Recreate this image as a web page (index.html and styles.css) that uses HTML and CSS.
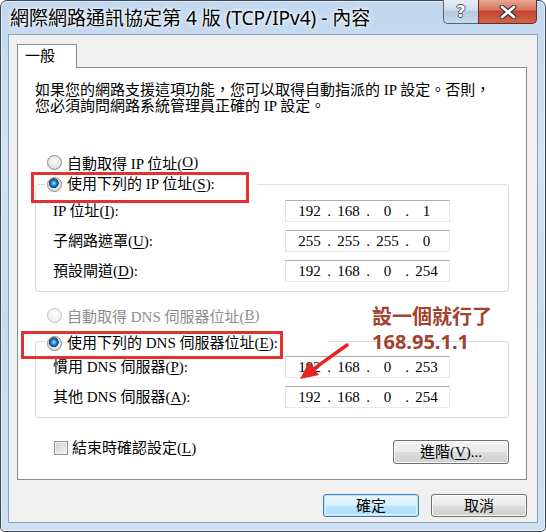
FILE: index.html
```html
<!DOCTYPE html>
<html>
<head>
  <meta charset="utf-8">
  <link rel="stylesheet" href="styles.css">
</head>
<body>
  <div class="window">
    <div class="titlebar">
      <span class="title">網際網路通訊協定第 4 版 (TCP/IPv4) - 內容</span>
      <div class="caption-buttons">
        <div class="cap help">?</div>
        <div class="cap close">
          <svg viewBox="0 0 20 14" width="20" height="14">
            <path d="M4 2L16 12M16 2L4 12" stroke="#3a3f46" stroke-width="5" stroke-linecap="round"/>
            <path d="M4 2L16 12M16 2L4 12" stroke="#fff" stroke-width="2.6" stroke-linecap="round"/>
          </svg>
        </div>
      </div>
    </div>

    <div class="client">
      <div class="tabs">
        <div class="tab">一般</div>
      </div>

      <div class="panel">
        <p class="desc">如果您的網路支援這項功能，您可以取得自動指派的 IP 設定。否則，<br>您必須詢問網路系統管理員正確的 IP 設定。</p>

        <div class="radio-row"><span class="radio"></span>自動取得 IP 位址(<u>O</u>)</div>

        <fieldset class="group">
          <legend class="legend legend-ip">
            <span class="legend-inner"><span class="radio checked"></span>使用下列的 IP 位址(<u>S</u>):</span>
            <span class="mark mark-ip"></span>
          </legend>
          <div class="fields">
            <label>IP 位址(<u>I</u>):</label>
            <div class="ip-field"><span>192</span><i>.</i><span>168</span><i>.</i><span>0</span><i>.</i><span>1</span></div>
            <label>子網路遮罩(<u>U</u>):</label>
            <div class="ip-field"><span>255</span><i>.</i><span>255</span><i>.</i><span>255</span><i>.</i><span>0</span></div>
            <label>預設閘道(<u>D</u>):</label>
            <div class="ip-field"><span>192</span><i>.</i><span>168</span><i>.</i><span>0</span><i>.</i><span>254</span></div>
          </div>
        </fieldset>

        <div class="radio-row disabled"><span class="radio"></span>自動取得 DNS 伺服器位址(<u>B</u>)</div>

        <fieldset class="group group-dns">
          <legend class="legend legend-dns">
            <span class="legend-inner"><span class="radio checked"></span>使用下列的 DNS 伺服器位址(<u>E</u>):</span>
            <span class="mark mark-dns"></span>
          </legend>
          <div class="fields">
            <label>慣用 DNS 伺服器(<u>P</u>):</label>
            <div class="ip-field"><span>192</span><i>.</i><span>168</span><i>.</i><span>0</span><i>.</i><span>253</span></div>
            <label>其他 DNS 伺服器(<u>A</u>):</label>
            <div class="ip-field"><span>192</span><i>.</i><span>168</span><i>.</i><span>0</span><i>.</i><span>254</span></div>
          </div>
        </fieldset>

        <div class="check-row">
          <label class="check"><span class="checkbox"></span>結束時確認設定(<u>L</u>)</label>
          <button class="btn advanced">進階(<u>V</u>)...</button>
        </div>

        <div class="note">設一個就行了<br>168.95.1.1</div>
        <svg class="arrow" viewBox="0 0 56 44" width="56" height="44">
          <path d="M51 5L18 28.7" stroke="#e8261f" stroke-width="3.5" stroke-linecap="round"/>
          <polygon points="4,39 23,35 13,22" fill="#e8261f"/>
        </svg>
      </div>

      <div class="dialog-buttons">
        <button class="btn default">確定</button>
        <button class="btn">取消</button>
      </div>
    </div>
  </div>
</body>
</html>
```

FILE: styles.css
```css
* {
  margin: 0;
  padding: 0;
  box-sizing: border-box;
}

body {
  width: 546px;
  height: 532px;
  background: #fff;
  overflow: hidden;
}

/* Window frame */
.window {
  width: 546px;
  height: 532px;
  border: 1px solid #3b4b5c;
  border-radius: 7px 7px 5px 5px;
  background: linear-gradient(180deg, #c2d7ee 0%, #d3e3f4 30%, #c7dbf0 60%, #cfe1f4 100%);
  box-shadow: inset 0 0 0 1px rgba(255, 255, 255, 0.55);
}

.titlebar {
  display: flex;
  justify-content: space-between;
  align-items: flex-start;
  height: 33px;
}

.title {
  padding-left: 9px;
  font-family: "Noto Sans", "Noto Sans CJK TC", sans-serif;
  font-size: 19px;
  line-height: 35px;
  color: #000;
  white-space: nowrap;
  text-shadow: 0 0 6px #fff, 0 0 3px #fff;
}

.caption-buttons {
  display: flex;
  margin-right: 8px;
  margin-top: -1px;
}

.cap {
  height: 24px;
  display: flex;
  align-items: center;
  justify-content: center;
  border: 1px solid #556677;
  border-top: none;
}

.help {
  width: 35px;
  border-radius: 0 0 0 5px;
  border-right: none;
  background: linear-gradient(180deg, #e6eef7 0%, #cddbea 45%, #b6c9dd 50%, #c9dbee 100%);
  font-family: "DejaVu Sans", sans-serif;
  font-weight: bold;
  font-size: 16px;
  color: #fff;
  text-shadow: -1px 0 #4a5563, 1px 0 #4a5563, 0 -1px #4a5563, 0 1px #4a5563;
}

.close {
  width: 59px;
  border-radius: 0 0 5px 0;
  border-color: #6e2b20;
  background: linear-gradient(180deg, #eaa794 0%, #d7735c 42%, #c4452f 50%, #d0644a 100%);
}

/* Client area */
.client {
  width: 530px;
  height: 489px;
  margin: 0 7px;
  padding: 9px 10px 0 8px;
  border: 1px solid #8fa2b6;
  background: #f0f0f0;
  font-family: "Liberation Serif", "Noto Sans CJK TC", serif;
  font-size: 15px;
  color: #000;
}

.tabs {
  display: flex;
}

.tab {
  position: relative;
  z-index: 1;
  width: 60px;
  height: 24px;
  margin-bottom: -1px;
  padding-left: 7px;
  border: 1px solid #898c95;
  border-bottom: none;
  background: #fff;
  line-height: 22px;
}

.panel {
  position: relative;
  height: 413px;
  padding: 0 17px;
  border: 1px solid #898c95;
  background: #fff;
}

.desc {
  margin-top: 14px;
  line-height: 16px;
  white-space: nowrap;
}

u {
  text-decoration: underline;
  text-underline-offset: 2px;
}

.radio-row {
  display: flex;
  align-items: center;
  height: 20px;
  margin: 38px 0 0 12px;
  white-space: nowrap;
}

.radio-row.disabled {
  margin-top: 13px;
  color: #8d8d8d;
}

.radio {
  flex: none;
  width: 15px;
  height: 15px;
  margin-right: 5px;
  border: 1px solid #8a8a8a;
  border-radius: 50%;
  background: radial-gradient(circle at 50% 40%, #fafafa 0, #e6e6e6 55%, #c9c9c9 100%);
}

.disabled .radio {
  border-color: #c2c2c2;
  background: radial-gradient(circle at 50% 40%, #fdfdfd 0, #f2f2f2 60%, #e2e2e2 100%);
}

.radio.checked {
  background:
    radial-gradient(circle at 45% 40%, #bdefff 0, #48a8e4 1.6px, #1a5f9f 3.6px, #0d3f70 4.6px, transparent 5.2px),
    radial-gradient(circle at 50% 40%, #fafafa 0, #e6e6e6 55%, #c9c9c9 100%);
}

/* Group boxes */
.group {
  margin-top: 2px;
  padding: 0 0 9px 9px;
  border: 1px solid #d5dfe5;
  border-radius: 3px;
  min-width: 0;
}

.group-dns {
  margin-top: 4px;
}

.legend {
  position: relative;
  padding-left: 2px;
  line-height: 20px;
}

.legend-ip {
  width: 212px;
}

.legend-dns {
  width: 284px;
  padding-top: 4px;
}

.legend-inner {
  display: flex;
  align-items: center;
  height: 20px;
  white-space: nowrap;
}

.mark {
  position: absolute;
  border: 3px solid #e53030;
}

.mark-ip {
  left: -14px;
  top: -2px;
  width: 218px;
  height: 31px;
}

.mark-dns {
  left: -24px;
  top: 2px;
  width: 262px;
  height: 28px;
}

.fields {
  display: grid;
  grid-template-columns: 232px 165px;
  row-gap: 8px;
  align-items: center;
  margin: 6px 0 0 8px;
}

.group-dns .fields {
  margin-top: 3px;
}

.fields label {
  line-height: 22px;
  white-space: nowrap;
}

.ip-field {
  display: flex;
  height: 22px;
  padding-left: 8px;
  border: 1px solid;
  border-color: #abadb3 #e3e9ef #e3e9ef #e2e3ea;
  background: #fff;
  line-height: 20px;
}

.ip-field span {
  width: 31px;
  text-align: center;
}

.ip-field i {
  width: 8px;
  font-style: normal;
  text-align: center;
}

/* Bottom of the page */
.check-row {
  display: flex;
  justify-content: space-between;
  align-items: flex-start;
  margin-top: 22px;
}

.check {
  display: flex;
  align-items: flex-start;
  margin-left: 19px;
  line-height: 16px;
  white-space: nowrap;
}

.checkbox {
  width: 14px;
  height: 14px;
  margin: 1px 4px 0 0;
  border: 1px solid #8e8f8f;
  background: linear-gradient(135deg, #cbcfd5 0%, #f6f6f6 100%);
  box-shadow: inset 0 0 0 1px #f4f4f4;
}

.btn {
  width: 96px;
  height: 23px;
  border: 1px solid #707070;
  border-radius: 3px;
  background: linear-gradient(180deg, #f2f2f2 0%, #ebebeb 48%, #dddddd 52%, #cfcfcf 100%);
  box-shadow: inset 0 0 0 1px #fbfbfb;
  font-family: "Liberation Serif", "Noto Sans CJK TC", serif;
  font-size: 15px;
  color: #000;
  line-height: 20px;
}

.btn.advanced {
  width: 116px;
  height: 24px;
}

.btn.default {
  border-color: #3c7fb1;
  background: linear-gradient(180deg, #eaf6fd 0%, #d9f0fc 48%, #bee6fd 52%, #a7d9f5 100%);
  box-shadow: inset 0 0 0 1px #b9e2f8, inset 0 0 0 2px #e7f5fd;
}

.dialog-buttons {
  display: flex;
  justify-content: flex-end;
  gap: 12px;
  margin-top: 14px;
}

/* Annotation drawn over the dialog */
.note {
  position: absolute;
  left: 354px;
  top: 236px;
  font-family: "Noto Sans", "Noto Sans CJK TC", sans-serif;
  font-weight: bold;
  font-size: 20px;
  line-height: 25px;
  color: #a3432d;
  white-space: nowrap;
}

.arrow {
  position: absolute;
  left: 278px;
  top: 272px;
}
```
